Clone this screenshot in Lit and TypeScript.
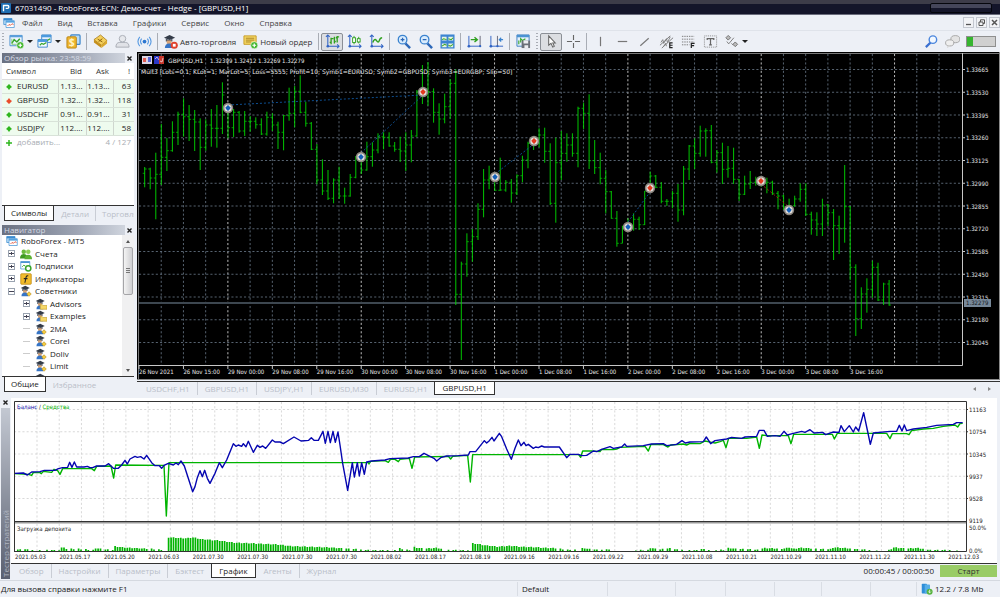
import { LitElement, html, svg, css, nothing } from "lit";
import { customElement, property, state } from "lit/decorators.js";
import { classMap } from "lit/directives/class-map.js";

/* ---------- icons ---------- */

const axes = svg`<path d="M3 1v12h12M1 3l2-2 2 2M13 11l2 2-2 2" fill="none" stroke="#2f62c4" stroke-width="1.1"/><circle cx="3" cy="13" r="1.4" fill="#2f62c4"/>`;
const hat = svg`<path d="M1 4l6-3 6 3-6 2.500z" fill="#333b48"/><path d="M3 5v3h7V5l-3 1.500z" fill="#4a5362"/><path d="M4 7h5v3q-2.500 2-5 0z" fill="#d9a679"/><path d="M2 15q0-5 4.500-5 4.500 0 4.500 5z" fill="#3574c6"/>`;
const plusBadge = svg`<circle cx="12" cy="12" r="3.800" fill="#3fb52b" stroke="#fff" stroke-width=".6"/><path d="M12 10v4M10 12h4" stroke="#fff" stroke-width="1.300"/>`;

const ICONS: Record<string, unknown> = {
  logo: svg`<rect width="16" height="16" rx="1.500" fill="#1e6fb4"/><path d="M4 13V4h6.500q2 0 2 2.300t-2 2.300H7.500" fill="none" stroke="#fff" stroke-width="2.200"/>`,
  app: svg`<path d="M1 2h11v8H1z" fill="#bfe0f7" stroke="#3a8bd0"/><path d="M1 2h11v2.500H1z" fill="#3a8bd0"/><path d="M4 5h11v9H4z" fill="#fff" stroke="#4b97d6"/><path d="M4 5h11v2.500H4z" fill="#56a4e0"/><path d="M6 12l2-2 2 1 2-2 2 1" fill="none" stroke="#e2553b" stroke-width="1.200"/>`,
  newchart: svg`<path d="M1 1.500h13v11H1z" fill="#edf6ff" stroke="#4a8fce"/><path d="M1 1.500h13v2H1z" fill="#5a9fdc"/><path d="M3 10l2.500-4 3 2.500 3-3.500" fill="none" stroke="#39a52b" stroke-width="1.600"/><path d="M3 5v6h7" fill="none" stroke="#6fbf5c" stroke-width=".8"/>${plusBadge}`,
  profile: svg`<path d="M5 1h10v8H5z" fill="#e6f2fc" stroke="#3f87cb"/><path d="M5 1h10v2.500H5z" fill="#4b9ade"/><path d="M1 6h10v8H1z" fill="#f4faff" stroke="#3f87cb"/><path d="M1 6h10v2.500H1z" fill="#4b9ade"/><path d="M3 12l2-2 2 1 3-2M11 7l3-2" fill="none" stroke="#39a52b" stroke-width="1.300"/>`,
  money: svg`<rect x="5" y="1" width="10" height="10" rx="1" fill="#b9dbf5" stroke="#3f87cb" stroke-width="1.300"/><rect x="1" y="3" width="10" height="12" rx="1" fill="#efb62e" stroke="#b98414"/><text x="6" y="13" font-size="11" font-weight="700" text-anchor="middle" fill="#fff3c4">$</text>`,
  gold: svg`<path d="M1 6l7-5 7 6-6 5z" fill="#f4cf5a" stroke="#a67612" stroke-width=".8"/><path d="M1 6l8 6v3L1 9z" fill="#c58f1c"/><path d="M9 12l6-5v3l-6 5z" fill="#dba92e"/><path d="M5 5.500l5 3M6 8l4-3" stroke="#8a5f0c"/>`,
  ghost: svg`<circle cx="8" cy="5" r="3.500" fill="#e6e8ec" stroke="#a9adb5"/><path d="M1 14q0-5 4-5h6q4 0 4 5z" fill="#e0e2e7" stroke="#a9adb5"/>`,
  signal: svg`<g fill="none" stroke="#5a9be2" stroke-width="1.200"><path d="M5 5q-2.500 3 0 6M11 5q2.500 3 0 6M3 3q-4 5 0 10M13 3q4 5 0 10"/></g><circle cx="8" cy="8" r="2" fill="#2c76d0"/>`,
  auto: svg`${hat}<circle cx="12" cy="12" r="3.800" fill="#e0412b"/><rect x="10.500" y="10.500" width="3" height="3" fill="#fff"/>`,
  order: svg`<path d="M1 2h13v9H1z" fill="#f4d765" stroke="#c79c23"/><path d="M3 4.500h9M3 6.500h9M3 8.500h6" stroke="#a98220"/>${plusBadge}`,
  bars: svg`${axes}<path d="M6.500 4v7M5 9h1.500M6.500 5H9M10 3v7M13 2v7M10 8h1.500M11.500 4H13M13 3h2" stroke="#2fa01f" stroke-width="1.400" fill="none"/>`,
  candles: svg`${axes}<path d="M7.500 2v9M12.500 3v7" stroke="#2fa01f"/><rect x="6" y="4" width="3" height="5" fill="#fff" stroke="#2fa01f"/><rect x="11" y="5" width="3" height="3.500" fill="#fff" stroke="#2fa01f"/>`,
  line: svg`${axes}<path d="M4 9q2-5 4-2t3 0 3-3" fill="none" stroke="#2fa01f" stroke-width="1.500"/>`,
  zoomin: svg`<path d="M10 10l5 5" stroke="#2c67b8" stroke-width="2.600"/><circle cx="7" cy="6" r="4.600" fill="#d9ecfd" stroke="#3b83cf" stroke-width="1.400"/><path d="M7 4v4M5 6h4" stroke="#2c67b8" stroke-width="1.300"/>`,
  zoomout: svg`<path d="M10 10l5 5" stroke="#2c67b8" stroke-width="2.600"/><circle cx="7" cy="6" r="4.600" fill="#d9ecfd" stroke="#3b83cf" stroke-width="1.400"/><path d="M5 6h4" stroke="#2c67b8" stroke-width="1.300"/>`,
  tiles: svg`<rect x=".5" y=".5" width="15" height="15" fill="#3d85d2"/><path d="M2 3h5v4H2zM9 3h5v4H9zM2 10h5v4H2zM9 10h5v4H9z" fill="#eaf5e2"/><path d="M2 6l2-1 3 1M9 5l3 1 2-2M2 13l3-2 2 1M9 12l2 1 3-2" fill="none" stroke="#39a52b" stroke-width="1.100"/>`,
  scroll: svg`<path d="M2 2v12M1 13h14" stroke="#2f62c4" fill="none"/><path d="M14 2v11" stroke="#667"/><path d="M4 6h6M8 3.500L11 6 8 8.500" fill="none" stroke="#2fa01f" stroke-width="1.500"/><circle cx="2" cy="13" r="1.400" fill="#2f62c4"/><circle cx="14" cy="13" r="1.200" fill="#2f62c4"/>`,
  shift: svg`<path d="M2 2v12M1 13h14" stroke="#2f62c4" fill="none"/><path d="M9 2v11" stroke="#667"/><path d="M15 6h-4M13 4l-2 2 2 2" fill="none" stroke="#3b83cf" stroke-width="1.300"/><circle cx="2" cy="13" r="1.400" fill="#2f62c4"/><circle cx="9" cy="13" r="1.200" fill="#2f62c4"/>`,
  template: svg`<path d="M1 1h13v12H1z" fill="#e5f1fb" stroke="#3f7fc0"/><path d="M1 1h13v2.500H1z" fill="#4b93d3"/><path d="M3 11V7M5 9V5l2 2 3-2" fill="none" stroke="#39a52b" stroke-width="1.200"/><rect x="6" y="7" width="9" height="8" fill="#6a7079"/><path d="M8 7h5v3H8zM9 12h4v3H9z" fill="#eceef1"/>`,
  cursor: svg`<path d="M5 2v10l2.500-2 1.800 4 1.700-.8L9.300 9.500H12z" fill="#fff" stroke="#666" stroke-width="1.100"/>`,
  cross: svg`<path d="M8 1v5.500M8 9.500V15M1 8h5.500M9.500 8H15" stroke="#666" stroke-width="1.200"/>`,
  vline: svg`<path d="M8 3v10" stroke="#777" stroke-width="1.300"/>`,
  hline: svg`<path d="M3 8h10" stroke="#777" stroke-width="1.300"/>`,
  trend: svg`<path d="M3.500 12.500l9-8" stroke="#777" stroke-width="1.300"/>`,
  channel: svg`<path d="M1 12l11-10M3 15L15 4" stroke="#777"/><path d="M2 9l2-3 1 4 3-5 1 4 3-6M5 13l2-3 1 3" fill="none" stroke="#777" stroke-width=".9"/><path d="M14.500 9.500h-3v5h3M11.500 12h3" fill="none" stroke="#222" stroke-width="1.300"/>`,
  fibo: svg`<path d="M1 2.500h13M1 5.500h13M1 8.500h13M1 11.500h8" stroke="#777" stroke-dasharray="1.500 1"/><path d="M14.500 10h-3.500V15M11 12.500h3" fill="none" stroke="#222" stroke-width="1.300"/>`,
  text: svg`<rect x="1.500" y="2" width="13" height="12" fill="none" stroke="#888" stroke-dasharray="1 1"/><path d="M4.500 6.500V5h7v1.500M8 5v6.500M6.500 11.500h3" fill="none" stroke="#666" stroke-width="1.300"/>`,
  shapes: svg`<path d="M2 4l2.500-2.500L7 4 4.500 6.500zM9.500 11l2.500-2.500 2.500 2.500-2.500 2.500z" fill="#bbb" stroke="#666" stroke-width=".9"/><path d="M3 8l2 2.500L10.500 4M8 10l2 2" stroke="#777" fill="none"/>`,
  search: svg`<path d="M7 9l-5 5" stroke="#3a6fd0" stroke-width="2.400"/><circle cx="9.500" cy="6" r="4" fill="#f2f8ff" stroke="#4b86dd" stroke-width="1.500"/>`,
  chat: svg`<ellipse cx="11" cy="5.500" rx="4.800" ry="3.800" fill="#e3e3e3" stroke="#a5a5a5"/><ellipse cx="5" cy="9.500" rx="4.400" ry="3.300" fill="#efefef" stroke="#a5a5a5"/><path d="M3 12l-1 3 4-2" fill="#d5d5d5"/>`,
  accounts: svg`<circle cx="5" cy="5" r="3" fill="#6cbb3c"/><path d="M0 14q0-6 5-6t5 6z" fill="#3f9a22"/><circle cx="11" cy="5" r="3" fill="#8ccf55"/><path d="M6 15q0-6 5-6t5 6z" fill="#5cb233"/>`,
  subs: svg`<path d="M1 2h12v10H1z" fill="#fff" stroke="#4b93d3"/><path d="M1 2h12v2H1z" fill="#4b93d3"/><path d="M3 9l2-2 2 1" fill="none" stroke="#39a52b" stroke-width="1.300"/><circle cx="11" cy="11" r="3.500" fill="#fff" stroke="#39a52b" stroke-width="2"/>`,
  fx: svg`<rect x="1" y="1" width="14" height="14" rx="1" fill="#f2bc2b" stroke="#bb8510"/><path d="M11 4q-2.500-1-3 2L6.500 13M5 7.500h5" fill="none" stroke="#222" stroke-width="1.400"/>`,
  expert: svg`${hat}<path d="M9 12l3-3 3 3-3 3z" fill="#f3cb3f" stroke="#b58a18" stroke-width=".8"/>`,
  folder: svg`${hat}<path d="M7 9h3l1 1h5v5H7z" fill="#f6d868" stroke="#c19a2b" stroke-width=".8"/>`,
  server: svg`<rect x="1" y="1" width="7" height="13" rx="1" fill="#2f8ed8"/><rect x="5" y="2" width="7" height="12" rx="1" fill="#56aee8"/><circle cx="11.500" cy="11.500" r="4" fill="#57b33e"/><path d="M11.500 9v4M9.800 11.500l1.700 1.700 1.700-1.700" stroke="#fff" fill="none"/>`,
};

const icon = (name: string, cls = "ico") =>
  html`<svg class=${cls} viewBox="0 0 16 16" aria-hidden="true">${ICONS[name]}</svg>`;

/* ---------- price chart ---------- */

/* Hourly bars: high, low, close, measured in chart ticks below the top edge. */
const BARS: number[][] = [
  [321,382,327],[323,388,354],[278,478,343],[192,375,292],[234,333,272],[184,275,217],[155,255,163],[115,230,170],
  [135,243,178],[150,273,186],[175,330,262],[178,272,195],[147,260,205],[135,263,205],[67,222,105],[140,235,203],
  [147,231,157],[153,218,213],[153,228,184],[168,215,184],[172,206,194],[175,225,222],[155,227,172],[160,213,195],
  [185,267,217],[165,271,167],[83,182,160],[78,202,94],[46,160,157],[125,200,190],[186,270,268],[252,373,360],
  [298,405,393],[330,420,415],[355,430,360],[320,417,408],[383,431,408],[342,410,352],[288,355,290],[277,342,330],
  [245,332,290],[247,320,270],[220,280,230],[217,268,232],[217,260,258],[246,275,268],[230,306,273],[217,333,255],
  [210,307,228],[90,230,95],[15,132,93],[6,137,95],[85,188,157],[130,224,177],[101,190,140],[57,176,70],
  [28,735,703],[605,900,612],[520,650,545],[507,605,530],[430,540,448],[327,472,360],[317,388,355],[340,392,391],
  [293,392,390],[360,395,367],[357,428,399],[343,405,347],[287,367,300],[245,325,250],[230,270,250],[205,262,225],
  [203,308,274],[250,435,430],[233,488,308],[213,360,280],[220,305,255],[220,290,280],[140,322,145],[128,207,160],
  [103,327,302],[240,342,323],[278,373,355],[330,460,395],[393,476,475],[453,560,550],[497,550,500],[475,510,505],
  [460,512,478],[470,510,494],[393,495,393],[335,393,348],[345,384,382],[366,430,424],[417,438,424],[393,445,400],
  [372,485,450],[318,466,327],[255,360,258],[235,327,280],[197,290,213],[205,290,212],[195,310,307],[270,338,278],
  [248,372,328],[258,353,325],[263,372,358],[357,423,403],[347,405,372],[333,387,367],[350,377,367],[350,380,370],
  [353,400,367],[362,405,400],[393,448,408],[404,450,440],[416,450,437],[407,440,417],[370,425,388],[370,468,463],
  [455,524,480],[457,528,492],[416,528,435],[432,498,458],[447,600,497],[467,582,505],[315,548,440],[438,660,622],
  [613,828,776],[682,807,702],[655,758,688],[602,713,622],[608,723,720],[668,735,672],[660,737,735],
];
const STEP = 50 / 9;
const barX = (i: number) => 91 + (i - 15) * STEP;
const barY = (t: number) => 8 + t / 3;

const PRICES = ["1.33665","1.33530","1.33395","1.33260","1.33125","1.32990","1.32855","1.32720","1.32585","1.32450","1.32315","1.32180","1.32045"];
const TIMES = ["26 Nov 2021","26 Nov 15:00","29 Nov 00:00","29 Nov 08:00","29 Nov 16:00","30 Nov 00:00","30 Nov 08:00","30 Nov 16:00",
  "1 Dec 00:00","1 Dec 08:00","1 Dec 16:00","2 Dec 00:00","2 Dec 08:00","2 Dec 16:00","3 Dec 00:00","3 Dec 08:00","3 Dec 16:00"];
const DEALS: [number, number, string][] = [
  [91,56,"#1560b8"],[224,105,"#1560b8"],[358,125,"#1560b8"],[491,175,"#1560b8"],[652,158,"#1560b8"],
  [286,40,"#e2391f"],[397,89,"#e2391f"],[513,136,"#e2391f"],[624,129,"#e2391f"],
];

@customElement("price-chart")
class PriceChart extends LitElement {
  static styles = css`
    :host { display: block; background: #000; }
    .plot { display: block; width: 100%; height: auto; }
    .label { font-family: "DejaVu Sans Condensed", "DejaVu Sans", sans-serif; font-size: 6px; fill: #e8e8e8; }
    .wide { font-family: "DejaVu Sans", sans-serif; font-size: 6px; fill: #e8e8e8; }
    .dark { fill: #10161d; }
    .grid { stroke: #6c7b8b; stroke-width: 0.8; stroke-dasharray: 2.1 2.1; }
    .day { stroke: #d0d0d0; stroke-width: 0.9; stroke-dasharray: 2.1 2.1; }
    .frame { fill: none; stroke: #c8c8c8; }
    .bars { fill: none; stroke: #00dc00; stroke-width: 0.9; }
    .ticks { fill: none; stroke: #00b400; stroke-width: 0.8; }
    .deal { fill: none; stroke: #0e57a0; stroke-width: 0.9; stroke-dasharray: 2 2; }
    .loss { stroke: #a32a14; }
  `;
  render() {
    const cols = Array.from({ length: 36 }, (_, i) => i + 1);
    const bars = BARS.map(([hi, lo], i) => `M${barX(i).toFixed(1)} ${barY(hi).toFixed(1)}V${barY(lo).toFixed(1)}`).join("");
    const ticks = BARS.map(([hi, lo, close], i) => {
      const x = barX(i);
      const open = Math.min(Math.max(i ? BARS[i - 1][2] : 340, hi), lo);
      return `M${(x - 2).toFixed(1)} ${barY(open).toFixed(1)}h2M${x.toFixed(1)} ${barY(close).toFixed(1)}h2`;
    }).join("");
    return html`<svg class="plot" viewBox="0 0 863 328" role="img" aria-label="GBPUSD,H1">
      ${cols.map((i) => {
        const x = 2 + (i * 200) / 9;
        return svg`<line class=${i % 6 === 4 ? "day" : "grid"} x1=${x} x2=${x} y1="2" y2="313"/>`;
      })}
      ${PRICES.map((_, i) => svg`<line class="grid" x1="2" x2="825" y1=${17.5 + i * 22.75} y2=${17.5 + i * 22.75}/>`)}
      <path d="M2 251h824" stroke="#3d4750" stroke-width="2"/>
      <path class="ticks" d=${ticks}/>
      <path class="bars" d=${bars}/>
      <path class="deal" d="M91 53L286 43M224 101L286 43M358 122L397 92M491 170L513 140"/>
      <path class="deal loss" d="M624 132L652 155"/>
      ${DEALS.map(([x, y, c]) => svg`<circle cx=${x} cy=${y} r="5.200" fill="#8d8780"/><circle cx=${x} cy=${y} r="3.600" fill="#e4e0dc"/><path d=${`M${x} ${y - 3}l2.200 2.200v1.600l-2.200 2.200l-2.200-2.200v-1.600z`} fill=${c}/>`)}
      <path d="M1.500 328V1.500H863" fill="none" stroke="#777"/>
      <path d="M825.500 1V313.500H2" class="frame"/>
      <path d="M0 327.500H863M862.500 0V328" stroke="#8a8a8a"/>
      <g>
        <rect x="5" y="4" width="10" height="8" fill="#dcd6e6"/><path d="M6 6h3v4H6z" fill="#e05a50"/><path d="M11 5h3v5h-3z" fill="#5a6ad8"/>
        <rect x="17" y="4" width="5" height="8" fill="#2a36c8"/><rect x="22" y="4" width="5" height="8" fill="#c8382c"/><path d="M18 7l2-2 2 3M23 9l2 1 1-4" fill="none" stroke="#e8d8e0" stroke-width=".8"/>
      </g>
      <text class="wide" x="31" y="11">GBPUSD,H1</text>
      <text class="label" x="73" y="11">1.32399 1.32412 1.32269 1.32279</text>
      <text class="wide" x="4" y="22">Mult3 [Lots=0.1; KLot=1; MarLot=5; Loss=5555; Profit=10; Symb1=EURUSD; Symb2=GBPUSD; Symb3=EURGBP; Slip=50]</text>
      ${PRICES.map((p, i) => svg`<path d=${`M825 ${17.5 + i * 22.75}h3`} stroke="#c8c8c8"/><text class="label" x="829" y=${20 + i * 22.75}>${p}</text>`)}
      <rect x="827" y="247" width="27" height="8" fill="#778899"/>
      <text class="label dark" x="829" y="253">1.32279</text>
      ${TIMES.map((t, i) => svg`<path d=${`M${2 + (i * 400) / 9} 313v4`} stroke="#c8c8c8"/><text class="label" x=${2 + (i * 400) / 9} y="322">${t}</text>`)}
    </svg>`;
  }
}

/* ---------- tester chart ---------- */

const BALANCE = `43,235 70,234 82,240 95,231 120,230 133,226 165,226 175,221 188,218 203,217 209,202 216,217 223,201 230,216 252,216 262,214 270,218 278,218 290,213 315,213 326,206 340,220 355,220 365,210 375,196 382,207 390,192 405,184 412,187 422,185 432,192 440,181 455,203 465,212 478,212 485,220 492,211 505,205 520,210 528,204 535,209 543,198 553,213 578,290 585,275 592,248 600,227 607,245 614,226 622,250 630,265 645,235 658,203 667,218 680,195 700,146 708,154 715,150 725,154 730,146 738,155 745,139 760,172 772,151 780,157 788,153 797,160 817,135 825,141 840,141 850,146 882,126 903,138 926,136 934,128 942,136 955,136 969,109 976,145 984,109 991,143 999,109 1006,142 1014,111 1020,150 1028,205 1043,286 1057,203 1063,246 1072,203 1078,243 1085,203 1093,238 1100,201 1115,198 1155,195 1170,191 1225,189 1240,185 1258,185 1272,175 1290,184 1302,190 1310,198 1322,188 1340,183 1375,182 1405,180 1410,170 1427,170 1453,137 1460,144 1468,137 1476,127 1482,138 1498,115 1505,125 1520,162 1534,193 1545,160 1555,135 1563,152 1572,142 1578,152 1585,148 1600,160 1607,156 1615,158 1625,153 1633,156 1678,156 1700,188 1710,178 1735,178 1745,182 1760,181 1780,168 1790,170 1805,163 1830,155 1840,160 1865,156 1874,147 1880,154 1930,152 1955,147 1990,146 2000,152 2030,148 2046,137 2056,144 2070,141 2110,140 2119,126 2132,146 2145,137 2180,132 2195,127 2225,130 2235,126 2270,124 2278,106 2292,106 2302,124 2325,122 2340,124 2352,109 2362,120 2380,115 2405,109 2415,112 2430,104 2442,114 2468,112 2477,119 2500,111 2517,112 2523,92 2533,110 2548,92 2560,111 2567,96 2576,108 2591,53 2602,105 2611,148 2620,114 2670,109 2690,109 2698,91 2706,108 2713,90 2720,107 2740,102 2780,97 2810,91 2860,88 2870,83 2888,83`;
const EQUITY = `43,236 85,238 95,241 100,233 120,233 124,236 130,229 155,232 162,223 173,227 180,238 188,221 275,221 283,227 290,214 333,213 341,249 347,210 492,211 499,363 507,203 1105,203 1107,207 1112,199 1155,197 1165,202 1172,192 1185,193 1195,200 1200,193 1228,190 1236,220 1244,186 1345,184 1352,192 1358,184 1403,181 1411,261 1418,179 1736,179 1742,187 1748,168 1775,168 1800,170 1805,163 1840,164 1850,162 1860,157 1935,154 1945,168 1953,148 1990,149 2004,156 2012,150 2050,147 2060,150 2070,145 2100,146 2115,138 2135,142 2145,144 2160,140 2170,136 2178,158 2186,130 2240,130 2270,126 2278,160 2286,120 2300,122 2365,122 2373,146 2381,118 2497,118 2503,132 2512,115 2660,115 2670,131 2677,116 2720,116 2727,119 2735,107 2770,102 2800,100 2830,94 2865,90 2873,96 2880,86 2888,85`;
/* Deposit load envelope: position, level. */
const LOAD: number[][] = [
  [50,3],[75,4],[110,1],[140,3],[178,2],[185,10],[200,6],[240,5],[280,2],[288,8],[310,4],[338,2],[343,13],[365,10],[400,8],
  [460,5],[490,2],[503,0],[504,40],[560,37],[580,40],[600,35],[660,30],[700,24],[780,21],[840,18],[870,14],[920,12],[980,10],
  [1015,8],[1060,5],[1120,2],[1190,3],[1200,7],[1215,3],[1238,2],[1240,11],[1270,6],[1310,9],[1335,3],[1412,2],[1414,23],
  [1450,17],[1490,12],[1530,15],[1560,12],[1610,10],[1670,7],[1700,3],[1740,2],[1748,8],[1775,4],[1800,2],[1820,5],[1840,1],
  [1945,2],[1952,9],[1975,3],[2010,7],[2030,3],[2090,2],[2100,7],[2120,3],[2180,2],[2186,9],[2200,6],[2250,4],[2280,2],
  [2290,8],[2355,6],[2368,10],[2380,5],[2400,9],[2440,6],[2490,4],[2500,10],[2560,6],[2600,4],[2640,1],[2670,2],[2680,10],
  [2720,6],[2750,8],[2790,3],[2860,3],[2890,0],
];
const loadAt = (x: number) => {
  const i = LOAD.findIndex(([px]) => px > x);
  if (i < 1) return 0;
  const [x0, y0] = LOAD[i - 1];
  const [x1, y1] = LOAD[i];
  return y0 + ((y1 - y0) * (x - x0)) / (x1 - x0);
};
const DATES = ["2021.05.03","2021.05.17","2021.05.20","2021.06.03","2021.07.30","2021.07.30","2021.07.30","2021.07.30","2021.08.02","2021.08.17","2021.08.19",
  "2021.09.16","2021.09.16","2021.09.22","2021.09.29","2021.10.08","2021.10.21","2021.10.29","2021.11.10","2021.11.22","2021.11.30","2021.12.03"];
const LEVELS = ["11163", "10754", "10345", "9937", "9528"];

@customElement("tester-chart")
class TesterChart extends LitElement {
  static styles = css`
    :host { display: block; background: #fff; border-bottom: 1px solid #333; }
    .plot { display: block; width: 100%; height: auto; }
    .label { font-family: "DejaVu Sans Condensed", "DejaVu Sans", sans-serif; font-size: 6px; fill: #222; }
    .blue { fill: #0a0aa8; }
    .green { fill: #00b000; }
    .grid { stroke: #cfcfcf; stroke-width: 0.8; stroke-dasharray: 2.1 2.1; }
    .balance { fill: none; stroke: #0505b0; stroke-width: 4.2; stroke-linejoin: round; }
    .equity { fill: none; stroke: #00b400; stroke-width: 4.2; stroke-linejoin: round; }
    .load { stroke: #00b400; stroke-width: 1.7; }
    .frame { fill: none; stroke: #333; }
  `;
  render() {
    const cols = Array.from({ length: 42 }, (_, i) => 26 + (i * 200) / 9);
    let load = "";
    for (let i = 0; i < 390; i++) {
      const v = 46 + i * 7.3;
      const h = loadAt(v);
      const gap = h < 7 && (i * 37) % 11 < 5 - h / 3;
      if (h > 1.5 && !gap) load += `M${(v / 3 - 11).toFixed(1)} 153v${(-(h + ((i * 13) % 3)) / 3).toFixed(1)}`;
    }
    return html`<svg class="plot" viewBox="0 0 986 165" role="img" aria-label="Баланс / Средства">
      ${cols.map((x) => svg`<line class="grid" x1=${x} x2=${x} y1="4" y2="153"/>`)}
      ${LEVELS.map((_, i) => svg`<line class="grid" x1="3" x2="955" y1=${11.5 + i * 22.25} y2=${11.5 + i * 22.25}/>`)}
      <g transform="translate(-11 -3) scale(.33333)">
        <polyline class="equity" points=${EQUITY}/>
        <polyline class="balance" points=${BALANCE}/>
      </g>
      <path class="load" d=${load}/>
      <path d="M3 124.500H955" stroke="#999" stroke-width="2"/>
      <path class="frame" d="M3.500 153V3.500H955.500V153.500H3M3 123.500H955"/>
      <text class="label" x="6" y="11"><tspan class="blue">Баланс</tspan> / <tspan class="green">Средства</tspan></text>
      <text class="label" x="6" y="133">Загрузка депозита</text>
      ${LEVELS.map((t, i) => svg`<text class="label" x="958" y=${14 + i * 22.25}>${t}</text><path class="frame" d=${`M955 ${11.5 + i * 22.25}h2`}/>`)}
      <text class="label" x="958" y="125">9119</text>
      <text class="label" x="958" y="132">50.0%</text>
      <text class="label" x="958" y="155">0.0%</text>
      ${DATES.map((t, i) => svg`<text class="label" x=${4 + (i * 400) / 9} y="161">${t}</text>`)}
    </svg>`;
  }
}

/* ---------- application shell ---------- */

const QUOTES = [
  ["EURUSD", "1.13...", "1.13...", "63", "up"],
  ["GBPUSD", "1.32...", "1.32...", "118", "down"],
  ["USDCHF", "0.91...", "0.91...", "31", "up"],
  ["USDJPY", "112....", "112....", "58", "up"],
];
const TREE: [string, string, number, string][] = [
  ["RoboForex - MT5", "app", 0, ""],
  ["Счета", "accounts", 1, "+"],
  ["Подписки", "subs", 1, "+"],
  ["Индикаторы", "fx", 1, "+"],
  ["Советники", "expert", 1, "-"],
  ["Advisors", "folder", 2, "+"],
  ["Examples", "folder", 2, "+"],
  ["2MA", "expert", 2, ""],
  ["Corel", "expert", 2, ""],
  ["Doliv", "expert", 2, ""],
  ["Limit", "expert", 2, ""],
  ["Market", "expert", 2, ""],
];

@customElement("app-root")
class AppRoot extends LitElement {
  @property() account = "67031490 - RoboForex-ECN: Демо-счет - Hedge - [GBPUSD,H1]";
  @state() private chartTab = 5;
  @state() private testerTab = 4;

  static styles = css`
    :host { display: flex; flex-direction: column; min-height: 100vh; background: #edf0f6; color: #1a1a1a; font: 8px/12px "Open Sans", "Noto Sans", sans-serif; }
    * { box-sizing: border-box; }
    button { font: inherit; color: inherit; background: none; border: 0; padding: 0; margin: 0; white-space: nowrap; }
    .ico { width: 15px; height: 15px; flex: none; }
    .small { width: 12px; height: 12px; flex: none; }
    .title { display: flex; align-items: center; gap: 4px; height: 15px; padding: 1px 8px 0 1px; background: linear-gradient(#3d3c49 0 4px, #14152a 4px 14px, #6a6c7c 14px); color: #fff; }
    .title .ico { width: 10px; height: 10px; }
    .caps { margin-left: auto; width: 62px; height: 10px; border: 1px solid #05060c; border-radius: 2px; background: linear-gradient(#45465a 0 4px, #15162a 4px); }
    .menu { display: flex; align-items: center; height: 15px; padding-left: 3px; gap: 15px; color: #444; }
    .menu .small { margin-right: -8px; }
    .winbtns { margin-left: auto; display: flex; gap: 2px; }
    .winbtns button { width: 11px; height: 11px; border: 1px solid #c3c7cf; background: #f2f3f6; display: grid; place-items: center; }
    .winbtns svg { width: 7px; height: 7px; }
    .tools { display: flex; align-items: center; height: 22px; border-top: 1px solid #dfe3ea; color: #333; }
    .tool { width: 22px; height: 18px; display: grid; place-items: center; border: 1px solid transparent; border-radius: 2px; }
    .pressed { border-color: #8b8f96; background: #dcdee2; }
    .drop { display: flex; align-items: center; gap: 3px; width: 28px; padding-left: 3px; }
    .caret { width: 0; border: 3px solid transparent; border-top-color: #222; border-bottom: 0; }
    .wide { display: flex; align-items: center; gap: 2px; padding: 0 4px 0 3px; }
    .sep { width: 1px; height: 17px; margin: 0 2px; background: #a9adb5; }
    .grip { width: 2px; height: 18px; margin: 0 2px; background: repeating-linear-gradient(#a9adb5 0 1px, transparent 1px 3px); }
    .right { margin-left: auto; display: flex; align-items: center; gap: 6px; padding-right: 4px; }
    .meter { width: 30px; height: 11px; border: 1px solid #8f8f8f; background: linear-gradient(90deg, #36b52f 0 6px, #d0d0d0 6px); }
    .main { display: grid; grid-template-columns: 137px minmax(0, 1fr); }
    .side { display: flex; flex-direction: column; padding: 1px 3px 0 2px; gap: 4px; }
    .panel { display: flex; flex-direction: column; }
    .phead { display: flex; align-items: center; justify-content: space-between; height: 10px; line-height: 10px; }
    .phead span { flex: 1; color: #d5dae4; padding-left: 2px; background: linear-gradient(90deg, #6a7182, #9da4b3 60%, #d0d5de); }
    .x { width: 9px; height: 9px; display: grid; place-items: center; }
    .x svg { width: 5px; height: 5px; }
    .watch { height: 143px; background: #fff; border-bottom: 1px solid #333; }
    table { width: 100%; border-collapse: collapse; table-layout: fixed; }
    th { height: 16px; padding: 0; font-weight: 400; text-align: right; padding-right: 4px; color: #333; border-bottom: 1px solid #ddd; }
    td { height: 14px; padding: 0 3px 0 0; text-align: right; line-height: 12px; }
    th:first-child, td:first-child { text-align: left; padding-left: 4px; white-space: nowrap; }
    .q td { background: #eefbee; border-right: 1px solid #cfd6cf; border-bottom: 1px solid #d8e2d8; }
    .q td:last-child { border-right: 0; }
    .c1 { width: 56px; } .c2 { width: 28px; } .c3 { width: 27px; } .c4 { width: 21px; }
    .arrow { width: 6px; height: 6px; margin-right: 5px; vertical-align: -1px; }
    .add td { color: #a9adb3; }
    .tabs { display: flex; align-items: stretch; height: 15px; color: #b9bec8; overflow: hidden; padding-left: 1px; }
    .tab { padding: 0 7px; }
    .tab + .tab { border-left: 1px solid #c9cdd5; }
    .tab.on, .tab.on + .tab { border-left-color: transparent; }
    .tab.on { background: #fff; color: #222; border: 1px solid #333; border-top: 0; }
    .side .tab { padding: 0 6px; }
    .side .tabs { padding-left: 2px; }
    .tree { display: grid; grid-template-columns: 1fr 12px; height: 142px; background: #fff; border-bottom: 1px solid #333; overflow: hidden; }
    .list { list-style: none; margin: 0; padding: 0; height: 150px; display: flex; flex-direction: column; }
    .node { flex: 1; display: flex; align-items: center; gap: 3px; padding-left: 4px; min-height: 0; }
    .l1 { padding-left: 6px; }
    .l2 { padding-left: 21px; }
    .box { width: 7px; height: 7px; margin-right: 2px; border: 1px solid #9aa3b0; background: linear-gradient(90deg, transparent 2px, #445 2px 3px, transparent 3px) center / 5px 3px no-repeat, linear-gradient(transparent 2px, #445 2px 3px, transparent 3px), #fff; }
    .box.minus { background: linear-gradient(transparent 2px, #445 2px 3px, transparent 3px), #fff; }
    .box.none { border: 0; background: linear-gradient(transparent 3px, #ccc 3px 4px, transparent 4px); }
    .bar { display: flex; flex-direction: column; align-items: center; background: #f0f0f1; height: 141px; padding: 5px 0 4px; }
    .thumb { width: 10px; height: 48px; margin: 4px 0 auto; border: 1px solid #a5a5a8; border-radius: 2px; background: linear-gradient(90deg, #f4f4f4, #cfcfd2); display: grid; place-items: center; }
    .thumb i { width: 4px; height: 6px; background: repeating-linear-gradient(#777 0 1px, transparent 1px 2px); }
    .tri { width: 0; border: 2px solid transparent; }
    .tri.up { border-bottom: 3px solid #555; border-top: 0; }
    .tri.down { border-top: 3px solid #555; border-bottom: 0; }
    .charts .tabs { padding: 0 9px 0 2px; margin-top: 1px; border-top: 1px solid #333; height: 14px; }
    .nav { margin-left: auto; display: flex; align-items: center; gap: 12px; }
    .tri.left { border-right: 3px solid #888; border-left: 0; }
    .tri.rgt { border-left: 3px solid #888; border-right: 0; }
    .tester { display: grid; grid-template-columns: 11px minmax(0, 1fr); padding-right: 3px; margin-top: 3px; }
    .strip { display: flex; flex-direction: column; gap: 1px; padding: 0 1px 1px; }
    .vert { flex: 1; writing-mode: vertical-rl; transform: rotate(180deg); background: linear-gradient(#5a6070, #c3c8d2); color: #aeb4c0; line-height: 9px; padding-top: 2px; white-space: nowrap; overflow: hidden; min-height: 0; }
    .row { display: flex; align-items: flex-start; height: 16px; }
    .row .tabs { flex: 1; height: 14px; }
    .row time { line-height: 14px; margin-right: 6px; }
    .start { width: 57px; height: 12px; margin-top: 1px; background: #99cc66; color: #333; line-height: 12px; }
    .status { display: grid; grid-template-columns: 518fr 90fr 68fr 50fr 49fr 47fr 49fr 46fr 83fr; height: 17px; margin-top: auto; border-top: 1px solid #d5d9e0; align-items: center; }
    .status span { padding-left: 4px; height: 14px; line-height: 14px; border-right: 1px solid #d9dde4; white-space: nowrap; }
    .status span:first-child { padding-left: 1px; }
    .status .net { display: flex; gap: 2px; align-items: center; border: 0; }
  `;

  private tool(name: string, label: string, pressed = false) {
    return html`<button class=${classMap({ tool: true, pressed })} aria-label=${label}>${icon(name)}</button>`;
  }
  private tabs(items: string[], active: number, pick: (i: number) => void, extra: unknown = nothing) {
    return html`<div class="tabs" role="tablist">
      ${items.map((t, i) => html`<button role="tab" class=${classMap({ tab: true, on: i === active })} aria-selected=${i === active} @click=${() => pick(i)}>${t}</button>`)}${extra}
    </div>`;
  }
  private close() {
    return html`<button class="x" aria-label="Закрыть"><svg viewBox="0 0 5 5"><path d="M.5.5l4 4M4.500.5l-4 4" stroke="#222" stroke-width="1.400"/></svg></button>`;
  }

  render() {
    const none = () => {};
    return html`
      <header class="title">${icon("logo")}<span>${this.account}</span><div class="caps"></div></header>
      <nav class="menu">
        ${icon("app", "small")}
        ${["Файл", "Вид", "Вставка", "Графики", "Сервис", "Окно", "Справка"].map((m) => html`<button>${m}</button>`)}
        <div class="winbtns">
          <button aria-label="Свернуть"><svg viewBox="0 0 7 7"><path d="M1 5.500h5" stroke="#555" stroke-width="1.300"/></svg></button>
          <button aria-label="Восстановить"><svg viewBox="0 0 7 7"><path d="M1 3h4v3.500H1zM2.500 3V.8h4V4.500H5" fill="none" stroke="#555"/></svg></button>
          <button aria-label="Закрыть"><svg viewBox="0 0 7 7"><path d="M1 1l5 5M6 1L1 6" stroke="#555" stroke-width="1.500"/></svg></button>
        </div>
      </nav>
      <div class="tools" role="toolbar">
        <i class="grip"></i>
        <button class="drop" aria-label="Новый график">${icon("newchart")}<i class="caret"></i></button>
        <button class="drop" aria-label="Профили">${icon("profile")}<i class="caret"></i></button>
        ${this.tool("money", "Обзор рынка")}<i class="sep"></i>
        ${this.tool("gold", "Маркет")}${this.tool("ghost", "Фриланс")}${this.tool("signal", "Сигналы")}<i class="sep"></i>
        <button class="wide">${icon("auto")}Авто-торговля</button>
        <button class="wide">${icon("order")}Новый ордер</button><i class="sep"></i>
        ${this.tool("bars", "Бары", true)}${this.tool("candles", "Свечи")}${this.tool("line", "Линия")}<i class="sep"></i>
        ${this.tool("zoomin", "Увеличить")}${this.tool("zoomout", "Уменьшить")}${this.tool("tiles", "Окна")}<i class="sep"></i>
        ${this.tool("scroll", "Автопрокрутка")}${this.tool("shift", "Сдвиг")}<i class="sep"></i>
        ${this.tool("template", "Шаблоны")}<i class="grip"></i>
        ${this.tool("cursor", "Курсор", true)}${this.tool("cross", "Перекрестие")}<i class="sep"></i>
        ${this.tool("vline", "Вертикальная линия")}${this.tool("hline", "Горизонтальная линия")}${this.tool("trend", "Трендовая линия")}
        ${this.tool("channel", "Канал")}${this.tool("fibo", "Фибоначчи")}${this.tool("text", "Текст")}
        <button class="drop" aria-label="Объекты">${icon("shapes")}<i class="caret"></i></button>
        <div class="right">${icon("search")}${icon("chat")}<div class="meter"></div></div>
      </div>
      <div class="main">
        <aside class="side">
          <section class="panel">
            <div class="phead"><span>Обзор рынка: 23:58:59</span>${this.close()}</div>
            <div class="watch">
              <table>
                <colgroup><col class="c1" /><col class="c2" /><col class="c3" /><col class="c4" /></colgroup>
                <thead><tr><th>Символ</th><th>Bid</th><th>Ask</th><th>!</th></tr></thead>
                <tbody>
                  ${QUOTES.map(([s, b, a, n, d]) => html`<tr class="q"><td><svg class="arrow" viewBox="0 0 6 6"><path d=${d === "up" ? "M3 0l3 3-1.500 1L3 6 1.500 4 0 3z" : "M3 6l3-3-1.500-1L3 0 1.500 2 0 3z"} fill=${d === "up" ? "#2eb61e" : "#ea4b2b"} /></svg>${s}</td><td>${b}</td><td>${a}</td><td>${n}</td></tr>`)}
                  <tr class="add"><td colspan="2"><svg class="arrow" viewBox="0 0 6 6"><path d="M3 0v6M0 3h6" stroke="#2eb61e" stroke-width="1.500" /></svg>добавить...</td><td colspan="2">4 / 127</td></tr>
                </tbody>
              </table>
            </div>
            ${this.tabs(["Символы", "Детали", "Торговля"], 0, none)}
          </section>
          <section class="panel">
            <div class="phead"><span>Навигатор</span>${this.close()}</div>
            <div class="tree">
              <ul class="list">
                ${TREE.map(([t, ic, lvl, box]) => html`<li class="node l${lvl}">${lvl ? html`<i class=${classMap({ box: true, minus: box === "-", none: !box })}></i>` : nothing}${icon(ic, "small")}${t}</li>`)}
              </ul>
              <div class="bar"><i class="tri up"></i><div class="thumb"><i></i></div><i class="tri down"></i></div>
            </div>
            ${this.tabs(["Общие", "Избранное"], 0, none)}
          </section>
        </aside>
        <section class="charts">
          <price-chart></price-chart>
          ${this.tabs(["USDCHF,H1", "GBPUSD,H1", "USDJPY,H1", "EURUSD,M30", "EURUSD,H1", "GBPUSD,H1"], this.chartTab, (i) => (this.chartTab = i),
            html`<div class="nav"><i class="tri left"></i><i class="tri rgt"></i></div>`)}
        </section>
      </div>
      <section class="tester">
        <div class="strip">${this.close()}<div class="vert">Тестер стратегий</div></div>
        <div>
          <tester-chart></tester-chart>
          <div class="row">
            ${this.tabs(["Обзор", "Настройки", "Параметры", "Бэктест", "График", "Агенты", "Журнал"], this.testerTab, (i) => (this.testerTab = i))}
            <time>00:00:45 / 00:00:50</time>
            <button class="start">Старт</button>
          </div>
        </div>
      </section>
      <footer class="status">
        <span>Для вызова справки нажмите F1</span><span>Default</span><span></span><span></span><span></span><span></span><span></span><span></span>
        <span class="net">${icon("server", "small")}12.2 / 7.8 Mb</span>
      </footer>
    `;
  }
}
